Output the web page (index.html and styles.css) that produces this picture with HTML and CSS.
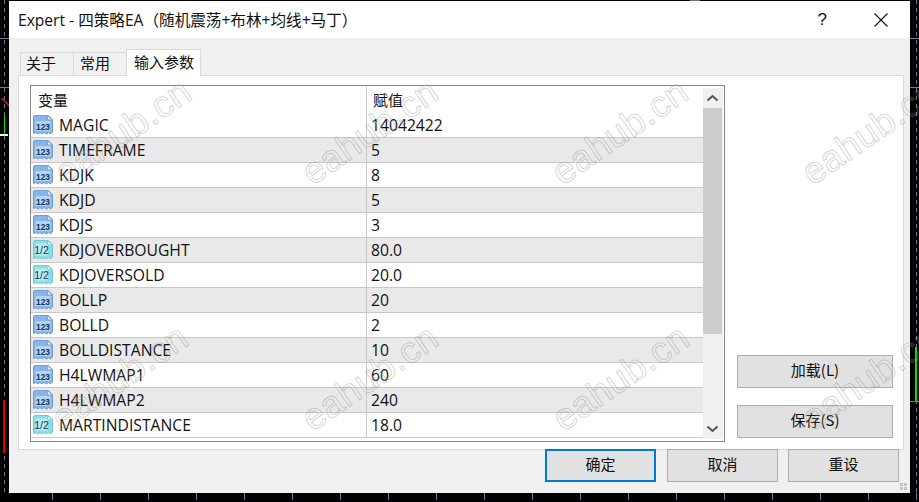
FILE: index.html
```html
<!DOCTYPE html>
<html lang="zh">
<head>
<meta charset="utf-8">
<title>Expert</title>
<link rel="stylesheet" href="styles.css">
</head>
<body>
<svg class="defs" width="0" height="0">
  <defs>
    <symbol id="ic-int" viewBox="0 0 20 20">
      <path d="M.5 2 Q.5 .5 2 .5 H15 L19.5 4.5 V17 L17.5 19 L15.5 17.5 L13.5 19 L11 17.5 L9 19 L7 17.5 L5 19 L3 17.5 L.5 18.5 Z" fill="#86b5e6" stroke="#6f9fd6" stroke-width="1"/>
      <path d="M14.5 .5 V5 H19.5 Z" fill="#dce9f8" stroke="#6f9fd6" stroke-width=".8"/>
      <rect x="2.5" y="6" width="15" height="10" fill="#b5d3f2"/>
      <text x="10" y="14.8" text-anchor="middle" textLength="14" lengthAdjust="spacingAndGlyphs" class="ic-text">123</text>
    </symbol>
    <symbol id="ic-dbl" viewBox="0 0 20 20">
      <path d="M.5 2 Q.5 .5 2 .5 H15 L19.5 4.5 V17 L17.5 19 L15.5 17.5 L13.5 19 L11 17.5 L9 19 L7 17.5 L5 19 L3 17.5 L.5 18.5 Z" fill="#8edde6" stroke="#72c8d4" stroke-width="1"/>
      <path d="M14.5 .5 V5 H19.5 Z" fill="#dcf5f8" stroke="#72c8d4" stroke-width=".8"/>
      <rect x="2.5" y="3.5" width="12" height="12" fill="#b9edf2"/>
      <text x="8.5" y="14" text-anchor="middle" class="ic-text half">1/2</text>
    </symbol>
  </defs>
</svg>

<div class="chart">
  <span class="mark top-strip"></span>
  <span class="mark dash-l"></span>
  <span class="mark dash-r"></span>
  <span class="mark dash-b"></span>
  <span class="mark tick tick-l1"></span>
  <span class="mark tick tick-l2"></span>
  <span class="mark tick tick-r1"></span>
  <span class="mark tick tick-r2"></span>
  <span class="mark tick tick-r3"></span>
  <span class="mark candle-green-l"></span>
  <span class="mark candle-cap-l"></span>
  <span class="mark candle-red-l"></span>
  <span class="mark candle-green-r"></span>
  <span class="mark trend"></span>
</div>

<div class="window">
  <header class="titlebar">
    <span class="title">Expert - 四策略EA（随机震荡+布林+均线+马丁）</span>
    <span class="help">?</span>
    <svg class="close" width="14" height="14" viewBox="0 0 14 14"><path d="M.5 .5 L13.5 13.5 M13.5 .5 L.5 13.5" stroke="#111" stroke-width="1.1" fill="none"/></svg>
  </header>

  <div class="client">
    <nav class="tabs">
      <span class="tab first">关于</span>
      <span class="tab">常用</span>
      <span class="tab active">输入参数</span>
    </nav>

    <section class="panel">
      <div class="list">
        <div class="table">
          <div class="row head"><span class="c1 head-name">变量</span><span class="c2">赋值</span></div>
          <div class="row"><span class="c1"><svg class="ic"><use href="#ic-int"/></svg>MAGIC</span><span class="c2">14042422</span></div>
          <div class="row alt"><span class="c1"><svg class="ic"><use href="#ic-int"/></svg>TIMEFRAME</span><span class="c2">5</span></div>
          <div class="row"><span class="c1"><svg class="ic"><use href="#ic-int"/></svg>KDJK</span><span class="c2">8</span></div>
          <div class="row alt"><span class="c1"><svg class="ic"><use href="#ic-int"/></svg>KDJD</span><span class="c2">5</span></div>
          <div class="row"><span class="c1"><svg class="ic"><use href="#ic-int"/></svg>KDJS</span><span class="c2">3</span></div>
          <div class="row alt"><span class="c1"><svg class="ic"><use href="#ic-dbl"/></svg>KDJOVERBOUGHT</span><span class="c2">80.0</span></div>
          <div class="row"><span class="c1"><svg class="ic"><use href="#ic-dbl"/></svg>KDJOVERSOLD</span><span class="c2">20.0</span></div>
          <div class="row alt"><span class="c1"><svg class="ic"><use href="#ic-int"/></svg>BOLLP</span><span class="c2">20</span></div>
          <div class="row"><span class="c1"><svg class="ic"><use href="#ic-int"/></svg>BOLLD</span><span class="c2">2</span></div>
          <div class="row alt"><span class="c1"><svg class="ic"><use href="#ic-int"/></svg>BOLLDISTANCE</span><span class="c2">10</span></div>
          <div class="row"><span class="c1"><svg class="ic"><use href="#ic-int"/></svg>H4LWMAP1</span><span class="c2">60</span></div>
          <div class="row alt"><span class="c1"><svg class="ic"><use href="#ic-int"/></svg>H4LWMAP2</span><span class="c2">240</span></div>
          <div class="row"><span class="c1"><svg class="ic"><use href="#ic-dbl"/></svg>MARTINDISTANCE</span><span class="c2">18.0</span></div>
        </div>
        <div class="scrollbar">
          <svg class="arrow" width="19" height="20" viewBox="0 0 19 20"><path d="M4.5 12.5 L9.5 8 L14.5 12.5" fill="none" stroke="#555" stroke-width="2"/></svg>
          <div class="thumb"></div>
          <div class="track"></div>
          <svg class="arrow" width="19" height="20" viewBox="0 0 19 20"><path d="M4.5 7.5 L9.5 12 L14.5 7.5" fill="none" stroke="#555" stroke-width="2"/></svg>
        </div>
      </div>
      <div class="side">
        <button class="btn wide">加载(L)</button>
        <button class="btn wide">保存(S)</button>
      </div>
    </section>

    <footer class="footer">
      <button class="btn std primary">确定</button>
      <button class="btn std">取消</button>
      <button class="btn std last">重设</button>
    </footer>
    <svg class="grip" width="8" height="8" viewBox="0 0 8 8"><path d="M0 0h3v3H0zM4 0h3v3H4zM0 4h3v3H0zM4 4h3v3H4z" fill="#c4c4c4"/></svg>
  </div>
</div>

<div class="wm wm-a1">eahub.cn</div>
<div class="wm wm-a2">eahub.cn</div>
<div class="wm wm-a3">eahub.cn</div>
<div class="wm wm-a4">eahub.cn</div>
<div class="wm wm-b1">eahub.cn</div>
<div class="wm wm-b2">eahub.cn</div>
<div class="wm wm-b3">eahub.cn</div>
<div class="wm wm-b4">eahub.cn</div>
</body>
</html>
```
FILE: styles.css
```css
* { box-sizing: border-box; }
html, body { margin: 0; padding: 0; }
body {
  width: 919px;
  height: 502px;
  background: #000;
  overflow: hidden;
  position: relative;
  font-family: "Open Sans", "Noto Sans CJK SC", sans-serif;
  color: #111;
}
.defs { position: absolute; }
.ic-text { font: 700 9.5px "Liberation Sans", sans-serif; fill: #12345c; }
.ic-text.half { font-size: 10.5px; font-weight: 400; }

.chart { position: absolute; inset: 0; }
.mark { position: absolute; display: block; }
.candle-green-l { left: 4px; top: 115px; width: 1px; height: 20px; background: #00e000; }
.candle-cap-l { left: 0; top: 134px; width: 8px; height: 2px; background: #fff; }
.candle-red-l { left: 3px; top: 400px; width: 2px; height: 53px; background: #e00000; }
.candle-green-r { left: 915px; top: 347px; width: 2px; height: 54px; background: #00e000; }
.dash-l { left: 4px; top: 0; width: 1px; height: 493px; background: repeating-linear-gradient(#6f7f90 0 4px, transparent 4px 8px); }
.dash-r { left: 916px; top: 0; width: 1px; height: 493px; background: repeating-linear-gradient(#6f7f90 0 4px, transparent 4px 8px); }
.dash-b { left: 8px; top: 493px; width: 911px; height: 7px; background: repeating-linear-gradient(90deg, transparent 0 44px, #6f7f90 44px 45px, transparent 45px 48px); }
.tick { height: 1px; background: #6f7f90; }
.tick-l1 { left: 0; top: 38px; width: 9px; }
.tick-l2 { left: 0; top: 87px; width: 9px; }
.tick-r1 { left: 910px; top: 38px; width: 9px; }
.tick-r2 { left: 910px; top: 87px; width: 9px; }
.tick-r3 { left: 910px; top: 401px; width: 9px; }
.trend { left: 0; top: 101px; width: 11px; height: 2px; background: #a02020; transform: rotate(45deg); }
.top-strip { left: 690px; top: 0; width: 10px; height: 1px; background: #777; }

.window {
  position: absolute;
  left: 9px;
  top: 1px;
  width: 901px;
  height: 492px;
  display: flex;
  flex-direction: column;
  background: #f0f0f0;
}
.titlebar {
  height: 37px;
  flex: none;
  background: #fff;
  display: flex;
  align-items: center;
  padding: 0 22px 0 9px;
}
.title { font-size: 15.6px; flex: 1; white-space: nowrap; }
.help { font: 17px "Liberation Sans", sans-serif; margin-right: 47px; }
.close { display: block; }

.client { flex: 1; position: relative; padding: 10px 6px 0 9px; display: flex; flex-direction: column; }
.tabs { display: flex; align-items: flex-end; height: 27px; padding-left: 2px; position: relative; z-index: 1; }
.tab {
  height: 23px;
  width: 54px;
  background: #f0f0f0;
  border: 1px solid #d9d9d9;
  border-bottom: 0;
  margin-right: -1px;
  font-size: 15px;
  line-height: 20px;
  padding-left: 6px;
}
.tab.first { padding-left: 5px; }
.tab.active {
  height: 27px;
  width: 75px;
  background: #fff;
  line-height: 24px;
  margin-bottom: -1px;
  padding-left: 7px;
}
.panel {
  width: 886px;
  height: 375px;
  background: #fff;
  border: 1px solid #d9d9d9;
  padding: 9px 10px 0 11px;
  display: flex;
}
.list {
  width: 695px;
  height: 357px;
  border: 1px solid #828790;
  background: #fff;
  display: flex;
  padding: 0 2px 0 0;
}
.table { width: 672px; flex: none; }
.row {
  height: 25px;
  display: flex;
  align-items: center;
  font-size: 15.7px;
  border-bottom: 1px solid #c8c8c8;
}
.row.alt { background: #e9e9e9; }
.row.head { height: 27px; border-bottom: 0; font-size: 15px; }
.c1 { width: 336px; flex: none; display: flex; align-items: center; padding-left: 2px; height: 100%; border-right: 1px solid #c8c8c8; white-space: nowrap; }
.head-name { padding-left: 7px; }
.c2 { padding-left: 4px; }
.row.head .c2 { padding-left: 6px; }
.ic { width: 20px; height: 20px; margin-right: 6px; flex: none; }

.scrollbar { width: 20px; flex: none; background: #f0f0f0; display: flex; flex-direction: column; margin: 2px 0; }
.arrow { display: block; flex: none; }
.thumb { height: 226px; flex: none; background: #cdcdcd; width: 19px; }
.track { flex: 1; }

.side { flex: 1; display: flex; flex-direction: column; align-items: flex-end; padding-top: 270px; gap: 17px; }
.btn {
  background: #e1e1e1;
  border: 1px solid #adadad;
  font-family: "Noto Sans CJK SC", "Open Sans", sans-serif;
  font-size: 15px;
  color: #111;
  padding: 0 0 4px;
  height: 33px;
}
.wide { width: 156px; }
.std { width: 111px; }
.primary { border: 2px solid #0078d7; }
.footer { display: flex; justify-content: flex-end; gap: 11px; padding-right: 5px; margin-top: -1px; position: relative; }
.footer .last { margin-left: -1px; }
.grip { position: absolute; right: 2px; bottom: 2px; }

.wm {
  position: absolute;
  width: 170px;
  height: 40px;
  text-align: center;
  font: 400 37px/40px "Liberation Sans", sans-serif;
  letter-spacing: .5px;
  color: rgba(255, 255, 255, .12);
  -webkit-text-stroke: 1px rgba(120, 120, 120, .33);
  transform: rotate(-34.5deg);
  pointer-events: none;
  white-space: nowrap;
}
.wm-a1 { left: 38px; top: 112px; }
.wm-a2 { left: 285px; top: 112px; }
.wm-a3 { left: 535px; top: 112px; }
.wm-a4 { left: 785px; top: 112px; }
.wm-b1 { left: 35px; top: 358px; }
.wm-b2 { left: 285px; top: 358px; }
.wm-b3 { left: 536px; top: 358px; }
.wm-b4 { left: 785px; top: 358px; }
```
